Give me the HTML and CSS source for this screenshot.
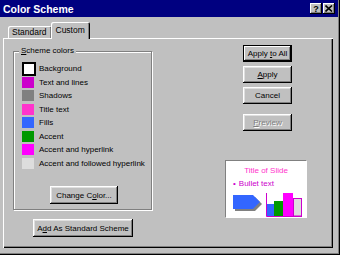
FILE: index.html
```html
<!DOCTYPE html>
<html>
    <head>
        <link rel="stylesheet" href="styles.css">
    </head>
    <body>
        <div class="window">
            <div class="titlebar">
                <span class="title">Color Scheme</span>
                <div class="tb-buttons">
                    <span class="tb-btn">?</span>
                    <span class="tb-btn tb-close">
                        <svg width="8" height="7" viewBox="0 0 8 7">
                            <path d="M0.5 0.5 L7 6.5 M7 0.5 L0.5 6.5" stroke="#000" stroke-width="1.6"/>
                        </svg>
                    </span>
                </div>
            </div>

            <div class="tabs">
                <div class="tab">Standard</div>
                <div class="tab tab-on">Custom</div>
            </div>

            <div class="panel">
                <div class="left">
                    <div class="group">
                        <span class="legend"><u>S</u>cheme colors</span>
                        <ul class="colors">
                            <li><span class="swatch sw-bg sel"></span>Background</li>
                            <li><span class="swatch sw-text"></span>Text and lines</li>
                            <li><span class="swatch sw-shadow"></span>Shadows</li>
                            <li><span class="swatch sw-title"></span>Title text</li>
                            <li><span class="swatch sw-fills"></span>Fills</li>
                            <li><span class="swatch sw-accent"></span>Accent</li>
                            <li><span class="swatch sw-link"></span>Accent and hyperlink</li>
                            <li><span class="swatch sw-followed"></span>Accent and followed hyperlink</li>
                        </ul>
                        <button class="btn btn-change">Change C<u>o</u>lor...</button>
                    </div>
                    <button class="btn btn-add">A<u>d</u>d As Standard Scheme</button>
                </div>

                <div class="right">
                    <button class="btn btn-side btn-default">Apply <u>t</u>o All</button>
                    <button class="btn btn-side"><u>A</u>pply</button>
                    <button class="btn btn-side">Cancel</button>
                    <button class="btn btn-side btn-preview" disabled><u>P</u>review</button>

                    <div class="preview">
                        <div class="preview-title">Title of Slide</div>
                        <div class="preview-bullet"><span class="dot">•</span>Bullet text</div>
                        <svg class="preview-art" width="78" height="26" viewBox="0 0 78 26">
                            <polygon points="9,5 29,5 36,12 29,19 9,19" fill="#808080"/>
                            <polygon points="7,3 27,3 34,10 27,17 7,17" fill="#3366ff"/>
                            <rect x="41" y="12" width="7" height="12" fill="#3366ff"/>
                            <rect x="48" y="9" width="9" height="15" fill="#009900"/>
                            <rect x="57" y="1" width="10" height="23" fill="#ff00ff"/>
                            <rect x="67.5" y="6.5" width="8" height="17.5" fill="#dddddd" stroke="#cc00cc"/>
                            <path d="M40.5 1 V24.5 H76" fill="none" stroke="#cc00cc"/>
                        </svg>
                    </div>
                </div>
            </div>
        </div>
    </body>
</html>
```

FILE: styles.css
```css
body {
    margin: 0;
    font-family: "Liberation Sans", Arial, sans-serif;
    font-size: 8px;
    color: #000;
}

.window {
    width: 340px;
    height: 255px;
    box-sizing: border-box;
    background-color: #c0c0c0;
    padding-right: 2px;
    box-shadow: inset -1px -1px #000, inset -2px -2px #808080;
    overflow: hidden;
}

.titlebar {
    display: flex;
    align-items: center;
    justify-content: space-between;
    height: 17px;
    padding: 0 3px 0 3px;
    background-color: #000080;
    color: #fff;
}

.title {
    font-size: 10.5px;
    font-weight: 700;
}

.tb-buttons {
    display: flex;
    gap: 1px;
}

.tb-btn {
    display: flex;
    align-items: center;
    justify-content: center;
    width: 12px;
    height: 11px;
    background-color: #c0c0c0;
    color: #000;
    font-size: 9px;
    font-weight: 700;
    box-shadow: inset -1px -1px #000, inset 1px 1px #fff, inset -2px -2px #808080;
}

.tabs {
    display: flex;
    align-items: flex-end;
    height: 16px;
    margin-top: 5px;
    padding-left: 8px;
}

.tab {
    height: 12px;
    line-height: 13px;
    padding: 0 5px 0 4px;
    border-radius: 2px 2px 0 0;
    font-size: 8.5px;
    box-shadow: inset 1px 1px #fff, inset -1px 0 #000, inset -2px 0 #808080;
}

.tab-on {
    position: relative;
    z-index: 1;
    height: 17px;
    line-height: 17px;
    margin-left: -1px;
    margin-bottom: -1px;
    padding: 0 5px;
    background-color: #c0c0c0;
    box-shadow: inset 1px 1px #fff, inset -1px 0 #000, inset -2px 0 #808080;
}

.panel {
    display: flex;
    width: 330px;
    height: 210px;
    margin-left: 3px;
    padding: 7px 0 0 10px;
    box-sizing: border-box;
    box-shadow: inset 1px 1px #fff, inset -1px -1px #000, inset -2px -2px #808080;
}

.left {
    width: 139px;
}

.group {
    position: relative;
    width: 139px;
    height: 159px;
    margin-top: 6px;
    box-sizing: border-box;
    border: 1px solid #808080;
    box-shadow: inset 1px 1px #fff, 1px 1px #fff;
}

.legend {
    position: absolute;
    top: -6px;
    left: 5px;
    padding: 0 2px;
    line-height: 10px;
    background-color: #c0c0c0;
}

.colors {
    list-style: none;
    margin: 10px 0 0 0;
    padding: 0 0 0 8px;
}

.colors li {
    display: flex;
    align-items: center;
    height: 13.5px;
    white-space: nowrap;
}

.swatch {
    flex: none;
    width: 12px;
    height: 11px;
    margin-right: 5px;
    box-sizing: border-box;
}

.sel {
    border: 2px solid #000;
    width: 14px;
    height: 14px;
    margin-right: 3px;
}

.sw-bg { background-color: #fff; }
.sw-text { background-color: #cc00cc; }
.sw-shadow { background-color: #808080; }
.sw-title { background-color: #ff33cc; }
.sw-fills { background-color: #3366ff; }
.sw-accent { background-color: #009900; }
.sw-link { background-color: #ff00ff; }
.sw-followed { background-color: #dddddd; }

.btn {
    display: block;
    padding: 0;
    border: none;
    background-color: #c0c0c0;
    color: #000;
    font-family: inherit;
    font-size: 8px;
    white-space: nowrap;
    box-shadow: inset -1px -1px #000, inset 1px 1px #fff, inset -2px -2px #808080, inset 2px 2px #dfdfdf;
}

.btn-change {
    width: 68px;
    height: 18px;
    margin: 16px 0 0 36px;
}

.btn-add {
    width: 100px;
    height: 18px;
    margin: 9px 0 0 20px;
}

.right {
    display: flex;
    flex-direction: column;
    align-items: flex-start;
    margin-left: 73px;
}

.btn-side {
    width: 49px;
    height: 17px;
    margin: 0 0 4px 18px;
}

.btn-default {
    box-shadow: inset 0 0 0 1px #000, inset -2px -2px #000, inset 2px 2px #fff, inset -3px -3px #808080;
}

.btn-preview {
    margin-top: 6px;
    color: #808080;
    text-shadow: 1px 1px #fff;
}

.preview {
    width: 82px;
    height: 58px;
    margin-top: 25px;
    box-sizing: border-box;
    background-color: #fff;
    border-top: 1px solid #808080;
    border-left: 1px solid #808080;
    border-right: 1px solid #fff;
    border-bottom: 1px solid #fff;
}

.preview-title {
    margin-top: 5px;
    line-height: 10px;
    text-align: center;
    color: #ff33cc;
}

.preview-bullet {
    margin-top: 3px;
    padding-left: 7px;
    line-height: 10px;
    color: #cc00cc;
}

.dot {
    margin-right: 3px;
}

.preview-art {
    display: block;
    margin-top: 3px;
}
```
